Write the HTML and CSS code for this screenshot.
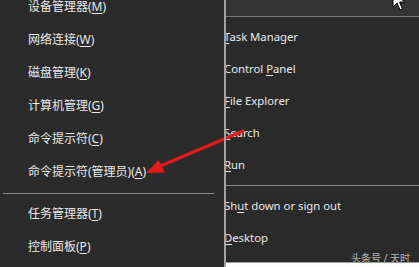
FILE: index.html
```html
<!DOCTYPE html>
<html lang="zh-CN">
<head>
    <meta charset="UTF-8">
    <title>Win+X 菜单</title>
    <link rel="stylesheet" href="styles.css">
</head>
<body>

    <div class="screen">
        <div class="winx">
            <div class="item">设备管理器(<u>M</u>)</div>
            <div class="item">网络连接(<u>W</u>)</div>
            <div class="item">磁盘管理(<u>K</u>)</div>
            <div class="item">计算机管理(<u>G</u>)</div>
            <div class="item">命令提示符(<u>C</u>)</div>
            <div class="item">命令提示符(管理员)(<u>A</u>)</div>
            <div class="sep"></div>
            <div class="item">任务管理器(<u>T</u>)</div>
            <div class="item">控制面板(<u>P</u>)</div>
        </div>

        <div class="divider"></div>

        <div class="english">
            <div class="topbar"></div>
            <div class="list">
                <div class="row"><u>T</u>ask Manager</div>
                <div class="row">Control <u>P</u>anel</div>
                <div class="row"><u>F</u>ile Explorer</div>
                <div class="row"><u>S</u>earch</div>
                <div class="row"><u>R</u>un</div>
                <div class="rsep"></div>
                <div class="row">Sh<u>u</u>t down or sign out</div>
                <div class="row"><u>D</u>esktop</div>
            </div>
            <div class="mark">头条号 / 天时</div>
            <div class="bottom"></div>
        </div>
    </div>

    <!-- red arrow drawn over the screenshot -->
    <svg class="arrow" width="419" height="267" viewBox="0 0 419 267">
        <line x1="243" y1="131" x2="158" y2="167" stroke="#e21b1b" stroke-width="3" stroke-linecap="round"/>
        <polygon points="146,173 165,172.5 158.5,160" fill="#e21b1b"/>
    </svg>

    <!-- mouse pointer -->
    <svg class="cursor" width="14" height="22" viewBox="0 0 14 22">
        <polygon points="1,1 1,17 5,13 8,20 10.5,19 7.5,12 12.5,12" fill="#fff" stroke="#000" stroke-width="1"/>
    </svg>

</body>
</html>
```

FILE: styles.css
```css
body {
    margin: 0;
    padding: 0;
    background-color: #2b2b2b;
    font-family: "Noto Sans", "Noto Sans CJK SC", sans-serif;
    font-size: 12px;
    color: #e9e9e9;
    overflow: hidden;
}

.screen {
    display: flex;
    width: 419px;
    height: 267px;
    overflow: hidden;
}

u {
    text-decoration-thickness: 1px;
    text-underline-offset: 2px;
}

/* left, chinese menu */
.winx {
    width: 224px;
    flex-shrink: 0;
    margin-top: -10px;
}

.item {
    height: 33px;
    line-height: 33px;
    padding-left: 28px;
    white-space: nowrap;
}

.sep {
    height: 1px;
    margin: 5px 10px 3px 3px;
    background-color: #8c8c8c;
}

.divider {
    width: 2px;
    flex-shrink: 0;
    background-color: #a3a3a3;
    position: relative;
    z-index: 1;
}

/* right, english menu */
.english {
    flex: 1;
    display: flex;
    flex-direction: column;
    margin-left: -2px;
    background-color: #2a2a2a;
    font-size: 11.3px;
}

.topbar {
    height: 16px;
    flex-shrink: 0;
    background-color: #343434;
    border-bottom: 1px solid #7c7c7c;
}

.list {
    flex-shrink: 0;
    padding-top: 4px;
}

.row {
    height: 32px;
    line-height: 32px;
    white-space: nowrap;
}

.rsep {
    height: 1px;
    margin: 4px 0 4px 0;
    background-color: #8c8c8c;
}

.mark {
    margin-top: auto;
    flex-shrink: 0;
    text-align: right;
    padding-right: 9px;
    font-size: 10px;
    line-height: 8px;
    color: #b4b4b4;
}

.bottom {
    height: 4px;
    flex-shrink: 0;
    border-top: 1px solid #9a9a9a;
    background-color: #fdfdfd;
}

.arrow {
    position: absolute;
    left: 0;
    top: 0;
    pointer-events: none;
}

.cursor {
    position: absolute;
    left: 392px;
    top: -10px;
}
```
